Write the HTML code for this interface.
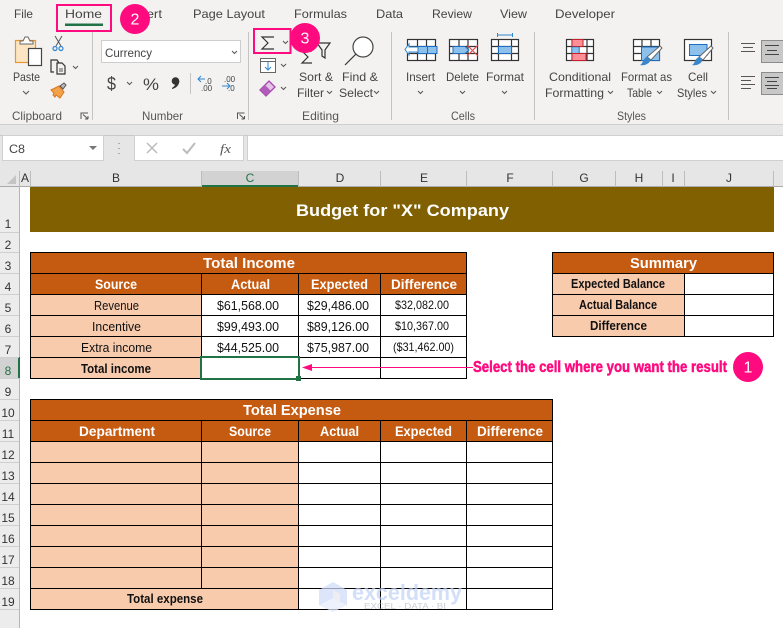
<!DOCTYPE html>
<html><head><meta charset="utf-8"><style>
html,body{margin:0;padding:0;background:#fff;width:783px;height:628px;overflow:hidden}
svg{display:block}
text{font-family:"Liberation Sans",sans-serif;white-space:pre}
.r{font-size:12px;fill:#444}
.d{font-size:13px;fill:#111}
.b{font-size:13px;fill:#111;font-weight:bold}
.w{font-size:14px;fill:#fff;font-weight:bold}
.h{font-size:12px;fill:#555}
.n{font-size:12px;fill:#333;text-anchor:middle}
.l{stroke:#000;stroke-width:1;fill:none}
.c{fill:none;stroke:#555;stroke-width:1}
.i{fill:none;stroke:#333;stroke-width:1.2}
</style></head><body>
<svg width="783" height="628" viewBox="0 0 783 628" xmlns="http://www.w3.org/2000/svg">
<!-- ribbon -->
<rect width="783" height="125" fill="#f3f2f1"/>
<rect y="124" width="783" height="63" fill="#e6e6e6"/>
<rect y="124" width="783" height="1" fill="#cfcfcf"/>
<rect y="135" width="783" height="1" fill="#c8c8c8"/>
<!-- tabs -->
<text class="r" x="14" y="18" textLength="19" lengthAdjust="spacingAndGlyphs">File</text>
<text class="r" x="65" y="18" textLength="37" lengthAdjust="spacingAndGlyphs">Home</text>
<text class="r" x="129" y="18" textLength="33" lengthAdjust="spacingAndGlyphs">Insert</text>
<text class="r" x="193" y="18" textLength="72" lengthAdjust="spacingAndGlyphs">Page Layout</text>
<text class="r" x="294" y="18" textLength="53" lengthAdjust="spacingAndGlyphs">Formulas</text>
<text class="r" x="376" y="18" textLength="27" lengthAdjust="spacingAndGlyphs">Data</text>
<text class="r" x="432" y="18" textLength="40" lengthAdjust="spacingAndGlyphs">Review</text>
<text class="r" x="500" y="18" textLength="27" lengthAdjust="spacingAndGlyphs">View</text>
<text class="r" x="555" y="18" textLength="60" lengthAdjust="spacingAndGlyphs">Developer</text>
<rect x="65" y="23.500" width="38" height="2.500" fill="#217346"/>
<rect x="57" y="5" width="54" height="26" fill="none" stroke="#ff0a7f" stroke-width="2"/>
<rect x="254" y="29" width="36.500" height="24" fill="none" stroke="#ff0a7f" stroke-width="2"/>
<!-- separators -->
<g fill="#c4c4c4"><rect x="92" y="32" width="1" height="88"/><rect x="248" y="32" width="1" height="88"/><rect x="391" y="32" width="1" height="88"/><rect x="534" y="32" width="1" height="88"/><rect x="728" y="32" width="1" height="88"/><rect x="190" y="73" width="1" height="21"/></g>
<!-- clipboard -->
<rect x="15.500" y="40.500" width="20" height="22" fill="#fbe5c3" stroke="#e8962e" stroke-width="1.200"/>
<path d="M20 44v-3h3l2-4h3l2 4h3v3z" fill="#fff" stroke="#666"/>
<rect x="28.500" y="48.500" width="13" height="17" fill="#fff" stroke="#444" stroke-width="1.200"/>
<text class="r" x="13" y="81" textLength="27" lengthAdjust="spacingAndGlyphs">Paste</text>
<path class="c" d="M23 91l3 3 3-3"/>
<path d="M55 36l6 10M62 36l-6 10" stroke="#555" fill="none"/>
<circle cx="55" cy="48.500" r="2" fill="none" stroke="#2e86d0" stroke-width="1.200"/><circle cx="61" cy="48.500" r="2" fill="none" stroke="#2e86d0" stroke-width="1.200"/>
<path class="i" d="M54 72h-3V60h6l2 3M57 63h5l3 3v8h-8z"/><path d="M59 69h4M59 71h4" stroke="#555"/>
<path class="c" d="M73 66l2.500 2.500L78 66"/>
<path d="M51 90l8-4 5 6-4 6-4-3-1 2-2-2 1-2z" fill="#f2a24a" stroke="#d9761e"/><path d="M60 86l4-3 2 2-3 4z" fill="#bbb" stroke="#555"/>
<text class="h" x="12" y="120" textLength="50" lengthAdjust="spacingAndGlyphs">Clipboard</text>
<g class="c" stroke-width=".9"><path d="M81 119v-6h7M88 119h-3M88 119v-3M83 114.500l4.500 4"/><path d="M237.500 119v-6h7M244.500 119h-3M244.500 119v-3M239.500 114.500l4.500 4"/></g>
<!-- number -->
<rect x="101.500" y="40.500" width="139" height="22" fill="#fff" stroke="#cdcdcd"/>
<text class="r" x="105" y="57" textLength="47" lengthAdjust="spacingAndGlyphs">Currency</text>
<path class="c" d="M232 51l2.500 2.500L237 51" stroke-width="1.200"/>
<text x="107" y="90" font-size="18" fill="#444" textLength="9" lengthAdjust="spacingAndGlyphs">$</text>
<path class="c" d="M127 82l2.500 2.500L132 82"/>
<text x="143" y="90" font-size="17" fill="#444" textLength="16" lengthAdjust="spacingAndGlyphs">%</text>
<circle cx="175.500" cy="81" r="3.800" fill="#333"/><path d="M179.300 81c0 4-3 7-7 8l-.5-1c2-1 3.500-2.500 3.500-5z" fill="#333"/>
<text x="205" y="84" font-size="8" fill="#444">.0</text><text x="201" y="91" font-size="8" fill="#444">.00</text>
<path d="M205 79h-7m3-3l-3 3 3 3" stroke="#2e86d0" fill="none"/>
<text x="224" y="82" font-size="8" fill="#444">.00</text><text x="228" y="91" font-size="8" fill="#444">.0</text>
<path d="M222 86h8m-3-3l3 3-3 3" stroke="#2e86d0" fill="none"/>
<text class="h" x="142" y="120" textLength="41" lengthAdjust="spacingAndGlyphs">Number</text>
<!-- editing -->
<path class="i" d="M274 37h-12l6 6-6 6h12"/>
<path class="c" d="M283 41l2.500 2.500L288 41"/>
<rect x="260.500" y="58.500" width="15" height="14" fill="#fff" stroke="#666"/><path d="M260.500 61.500h15" stroke="#666"/><path d="M268 62v8m-3-3l3 3 3-3" stroke="#2e86d0" fill="none"/>
<path class="c" d="M281 64l2.500 2.500L286 64"/>
<path d="M260 90l9-9 6 6-9 9z" fill="#e5c4e8" stroke="#a546ad" stroke-width="1.300"/><path d="M260 90l5-5 6 6-5 5z" fill="#b05cb8"/>
<path class="c" d="M281 87l2.500 2.500L286 87"/>
<path class="i" d="M312 51h-10l6 6-6 6h10"/>
<path class="i" d="M317 43h13l-5 7v8l-3-2v-6z" stroke="#555"/>
<text class="r" x="299" y="81" textLength="34" lengthAdjust="spacingAndGlyphs">Sort &amp;</text>
<text class="r" x="297" y="97" textLength="27" lengthAdjust="spacingAndGlyphs">Filter</text>
<path class="c" d="M327 91l2.500 2.500L332 91"/>
<circle cx="363" cy="47" r="10" fill="#fff" stroke="#444" stroke-width="1.200"/><path class="i" d="M356 54l-11 11"/>
<text class="r" x="342" y="81" textLength="36" lengthAdjust="spacingAndGlyphs">Find &amp;</text>
<text class="r" x="339" y="97" textLength="34" lengthAdjust="spacingAndGlyphs">Select</text>
<path class="c" d="M374 91l2.500 2.500L379 91"/>
<text class="h" x="302" y="120" textLength="37" lengthAdjust="spacingAndGlyphs">Editing</text>
<!-- cells -->
<g class="i"><rect x="407.500" y="39.500" width="28" height="21" fill="#fff"/><path d="M407.500 46.500h28M407.500 53.500h28M417.500 39.500v21M426.500 39.500v21"/></g>
<rect x="418" y="46.500" width="19" height="7" fill="#8dc0ea" stroke="#1b6ec2"/><path d="M427.500 46.500v7" stroke="#1b6ec2"/>
<path d="M418 47h-9v-3l-4 5.500 4 5.500v-3h9z" fill="#fff" stroke="#2e86d0"/>
<g class="i"><rect x="449.500" y="39.500" width="28" height="21" fill="#fff"/><path d="M449.500 46.500h28M449.500 53.500h28M459 39.500v21M468 39.500v21"/></g>
<path d="M453 46.500h12l4 3.500-4 3.500h-12z" fill="#8dc0ea" stroke="#1b6ec2"/>
<path d="M467 45l11 11M478 45l-11 11" stroke="#e84b4b" stroke-width="1.200"/>
<g class="i"><rect x="491.500" y="39.500" width="27" height="21" fill="#fff"/><path d="M491.500 46.500h27M491.500 53.500h27M498.500 39.500v21M511.500 39.500v21"/></g>
<rect x="498.500" y="46.500" width="13" height="7" fill="#8dc0ea" stroke="#1b6ec2"/>
<path d="M497 35h16M497.500 33v4M512.500 33v4" stroke="#2e86d0"/>
<text class="r" x="406" y="81" textLength="29" lengthAdjust="spacingAndGlyphs">Insert</text>
<text class="r" x="446" y="81" textLength="33" lengthAdjust="spacingAndGlyphs">Delete</text>
<text class="r" x="486" y="81" textLength="38" lengthAdjust="spacingAndGlyphs">Format</text>
<path class="c" d="M418 91l2.500 2.500L423 91M460 91l2.500 2.500L465 91M502 91l2.500 2.500L507 91"/>
<text class="h" x="451" y="120" textLength="24" lengthAdjust="spacingAndGlyphs">Cells</text>
<!-- styles -->
<g class="i"><rect x="566.500" y="39.500" width="27" height="21" fill="#fff"/><path d="M566.500 46.500h27M566.500 53.500h27M572 39.500v21M579 39.500v21M587 39.500v21"/></g>
<rect x="572" y="39.500" width="11" height="7" fill="#ff8f97" stroke="#c8202b"/><rect x="572" y="47" width="7" height="6.500" fill="#8dc0ea" stroke="#1b6ec2" stroke-width=".5"/><rect x="572" y="53.500" width="14" height="7" fill="#ff8f97" stroke="#c8202b"/>
<g class="i"><rect x="633.500" y="39.500" width="26" height="21" fill="#fff"/><path d="M633.500 46.500h26M633.500 53.500h26M642 39.500v21M651 39.500v21"/></g>
<rect x="641.500" y="47" width="18" height="13.500" fill="#8dc0ea" stroke="#1b6ec2"/>
<path d="M647 57l13-11 2 2-11 12z" fill="#fff" stroke="#666"/><path d="M640 65c3-1 3-7 7-8 2 0 4 2 3 4-1 3-6 5-10 4z" fill="#3a87cb"/>
<g class="i"><rect x="684.500" y="39.500" width="27" height="21" fill="#fff"/></g>
<rect x="689.500" y="44.500" width="17.500" height="11" fill="#8dc0ea" stroke="#1b6ec2"/>
<path d="M699 57l12-11 2 2-10 12z" fill="#fff" stroke="#666"/><path d="M692 65c3-1 3-7 7-8 2 0 4 2 3 4-1 3-6 5-10 4z" fill="#3a87cb"/>
<text class="r" x="549" y="81" textLength="62" lengthAdjust="spacingAndGlyphs">Conditional</text>
<text class="r" x="545" y="97" textLength="59" lengthAdjust="spacingAndGlyphs">Formatting</text>
<path class="c" d="M608 91l2.500 2.500L613 91"/>
<text class="r" x="621" y="81" textLength="51" lengthAdjust="spacingAndGlyphs">Format as</text>
<text class="r" x="627" y="97" textLength="25" lengthAdjust="spacingAndGlyphs">Table</text>
<path class="c" d="M657 91l2.500 2.500L662 91"/>
<text class="r" x="688" y="81" textLength="20" lengthAdjust="spacingAndGlyphs">Cell</text>
<text class="r" x="677" y="97" textLength="30" lengthAdjust="spacingAndGlyphs">Styles</text>
<path class="c" d="M711 91l2.500 2.500L716 91"/>
<text class="h" x="617" y="120" textLength="29" lengthAdjust="spacingAndGlyphs">Styles</text>
<!-- align -->
<path d="M741 43.500h14M743 47.500h10M741 51.500h14M741 76.500h14M741 80.500h10M741 84.500h14M741 88.500h10" stroke="#555"/>
<rect x="761.500" y="40.500" width="22" height="22" fill="#c8c8c8" stroke="#8c8c8c"/>
<rect x="761.500" y="72.500" width="22" height="22" fill="#c8c8c8" stroke="#8c8c8c"/>
<path d="M765 45.500h14M767 50.500h10M765 54.500h14M765 77.500h14M767 81.500h10M765 85.500h14M767 88.500h10" stroke="#444"/>
<!-- formula bar -->
<rect x="2.500" y="135.500" width="101" height="25" fill="#fff" stroke="#d0d0d0"/>
<text class="r" x="9" y="153" textLength="16" lengthAdjust="spacingAndGlyphs">C8</text>
<path d="M89 146h8l-4 4z" fill="#777"/>
<path d="M119 143v1M119 148v1M119 153v1" stroke="#999" stroke-width="1.500"/>
<rect x="134.500" y="135.500" width="109" height="25" fill="#fff" stroke="#d0d0d0"/>
<path d="M147 143l10 10M157 143l-10 10" stroke="#bbb" stroke-width="1.500"/>
<path d="M183 149l4 4 8-10" stroke="#bbb" stroke-width="2" fill="none"/>
<text x="220" y="153" font-size="13" font-style="italic" fill="#555" style="font-family:'Liberation Serif',serif" textLength="11" lengthAdjust="spacingAndGlyphs">fx</text>
<rect x="247.500" y="135.500" width="536" height="25" fill="#fff" stroke="#d0d0d0"/>
<!-- headers -->
<rect y="171" width="783" height="15" fill="#e6e6e6"/>
<rect x="0" y="186" width="783" height="1" fill="#aaa"/>
<path d="M7 184h9v-9z" fill="#c4c4c4"/>
<rect x="201" y="171" width="97" height="15" fill="#d2d2d2"/>
<rect x="201" y="185" width="97" height="2" fill="#217346"/>
<path d="M19.500 171v16M30.500 171v16M201.500 171v16M298.500 171v16M380.500 171v16M466.500 171v16M552.500 171v16M615.500 171v16M662.500 171v16M684.500 171v16M773.500 171v16" stroke="#bcbcbc"/>
<text class="n" x="25" y="182" font-size="11">A</text><text class="n" x="116" y="182">B</text><text class="n" x="250" y="182" style="fill:#217346">C</text><text class="n" x="340" y="182">D</text><text class="n" x="424" y="182">E</text><text class="n" x="510" y="182">F</text><text class="n" x="584" y="182">G</text><text class="n" x="639" y="182">H</text><text class="n" x="673" y="182">I</text><text class="n" x="729" y="182">J</text>
<!-- row headers -->
<rect y="187" width="19" height="441" fill="#ececec"/>
<rect y="357" width="19" height="21" fill="#d2d2d2"/>
<rect x="18" y="357" width="2" height="21" fill="#217346"/>
<rect x="19" y="187" width="1" height="170" fill="#b5b5b5"/><rect x="19" y="378" width="1" height="250" fill="#b5b5b5"/>
<path d="M0 232.500h19M0 252.500h19M0 273.500h19M0 294.500h19M0 315.500h19M0 336.500h19M0 357.500h19M0 378.500h19M0 399.500h19M0 420.500h19M0 441.500h19M0 462.500h19M0 483.500h19M0 504.500h19M0 525.500h19M0 546.500h19M0 567.500h19M0 588.500h19M0 609.500h19" stroke="#cfcfcf"/>
<g>
<text class="n" x="8" y="228">1</text><text class="n" x="8" y="249">2</text><text class="n" x="8" y="270">3</text><text class="n" x="8" y="291">4</text><text class="n" x="8" y="312">5</text><text class="n" x="8" y="333">6</text><text class="n" x="8" y="354">7</text><text class="n" x="8" y="375" style="fill:#217346">8</text><text class="n" x="8" y="396">9</text><text class="n" x="8" y="417">10</text><text class="n" x="8" y="438">11</text><text class="n" x="8" y="459">12</text><text class="n" x="8" y="480">13</text><text class="n" x="8" y="501">14</text><text class="n" x="8" y="522">15</text><text class="n" x="8" y="543">16</text><text class="n" x="8" y="564">17</text><text class="n" x="8" y="585">18</text><text class="n" x="8" y="606">19</text>
</g>
<!-- title -->
<rect x="30" y="187" width="744" height="45" fill="#806000"/>
<text x="296" y="216" font-size="17" font-weight="bold" fill="#fff" textLength="213" lengthAdjust="spacingAndGlyphs">Budget for "X" Company</text>
<!-- income table -->
<rect x="30" y="252" width="436" height="42" fill="#c55a11"/>
<rect x="30" y="294" width="171" height="84" fill="#f8cbad"/>
<path class="l" d="M30.500 252.500h436v126h-436zM30.500 273.500h436M30.500 294.500h436M30.500 315.500h436M30.500 336.500h436M30.500 357.500h436M201.500 273.500v105M298.500 273.500v105M380.500 273.500v105"/>
<text class="w" x="203" y="268" style="font-size:15px" textLength="92" lengthAdjust="spacingAndGlyphs">Total Income</text>
<text class="w" x="95" y="289" textLength="42" lengthAdjust="spacingAndGlyphs">Source</text>
<text class="w" x="231" y="289" textLength="39" lengthAdjust="spacingAndGlyphs">Actual</text>
<text class="w" x="311" y="289" textLength="57" lengthAdjust="spacingAndGlyphs">Expected</text>
<text class="w" x="391" y="289" textLength="66" lengthAdjust="spacingAndGlyphs">Difference</text>
<text class="d" x="94" y="310" textLength="45" lengthAdjust="spacingAndGlyphs">Revenue</text>
<text class="d" x="92" y="331" textLength="49" lengthAdjust="spacingAndGlyphs">Incentive</text>
<text class="d" x="81" y="352" textLength="71" lengthAdjust="spacingAndGlyphs">Extra income</text>
<text class="b" x="81" y="373" textLength="70" lengthAdjust="spacingAndGlyphs">Total income</text>
<text class="d" x="217" y="310" textLength="62" lengthAdjust="spacingAndGlyphs">$61,568.00</text>
<text class="d" x="217" y="331" textLength="62" lengthAdjust="spacingAndGlyphs">$99,493.00</text>
<text class="d" x="217" y="352" textLength="62" lengthAdjust="spacingAndGlyphs">$44,525.00</text>
<text class="d" x="307" y="310" textLength="62" lengthAdjust="spacingAndGlyphs">$29,486.00</text>
<text class="d" x="307" y="331" textLength="62" lengthAdjust="spacingAndGlyphs">$89,126.00</text>
<text class="d" x="307" y="352" textLength="62" lengthAdjust="spacingAndGlyphs">$75,987.00</text>
<text class="d" x="395" y="309" style="font-size:12px" textLength="54" lengthAdjust="spacingAndGlyphs">$32,082.00</text>
<text class="d" x="395" y="330" style="font-size:12px" textLength="54" lengthAdjust="spacingAndGlyphs">$10,367.00</text>
<text class="d" x="393" y="351" style="font-size:12px" textLength="61" lengthAdjust="spacingAndGlyphs">($31,462.00)</text>
<!-- selection -->
<rect x="201" y="357" width="98" height="22" fill="#fff" stroke="#217346" stroke-width="2"/>
<rect x="296" y="376" width="5" height="5" fill="#217346"/>
<!-- summary -->
<rect x="552" y="252" width="222" height="21" fill="#c55a11"/>
<rect x="552" y="273" width="132" height="63" fill="#f8cbad"/>
<path class="l" d="M552.500 252.500h221v84h-221zM552.500 273.500h221M552.500 294.500h221M552.500 315.500h221M684.500 273.500v63"/>
<text class="w" x="630" y="268" style="font-size:15px" textLength="67" lengthAdjust="spacingAndGlyphs">Summary</text>
<text class="b" x="571" y="288" textLength="94" lengthAdjust="spacingAndGlyphs">Expected Balance</text>
<text class="b" x="579" y="309" textLength="78" lengthAdjust="spacingAndGlyphs">Actual Balance</text>
<text class="b" x="590" y="330" textLength="57" lengthAdjust="spacingAndGlyphs">Difference</text>
<!-- expense table -->
<rect x="30" y="399" width="522" height="42" fill="#c55a11"/>
<rect x="30" y="441" width="268" height="168" fill="#f8cbad"/>
<path class="l" d="M30.500 399.500h522v210h-522zM30.500 420.500h522M30.500 441.500h522M30.500 462.500h522M30.500 483.500h522M30.500 504.500h522M30.500 525.500h522M30.500 546.500h522M30.500 567.500h522M30.500 588.500h522M201.500 420.500v168M298.500 420.500v189M380.500 420.500v189M466.500 420.500v189"/>
<text class="w" x="243" y="415" style="font-size:15px" textLength="98" lengthAdjust="spacingAndGlyphs">Total Expense</text>
<text class="w" x="79" y="436" textLength="76" lengthAdjust="spacingAndGlyphs">Department</text>
<text class="w" x="229" y="436" textLength="42" lengthAdjust="spacingAndGlyphs">Source</text>
<text class="w" x="320" y="436" textLength="39" lengthAdjust="spacingAndGlyphs">Actual</text>
<text class="w" x="395" y="436" textLength="57" lengthAdjust="spacingAndGlyphs">Expected</text>
<text class="w" x="477" y="436" textLength="66" lengthAdjust="spacingAndGlyphs">Difference</text>
<text class="b" x="127" y="603" textLength="76" lengthAdjust="spacingAndGlyphs">Total expense</text>
<!-- watermark -->
<g opacity=".72">
<path d="M333 582l14 8v15l-14 7-14-7v-15z" fill="#cfdcf8"/><path d="M333 590l7 4v8l-7-4z" fill="#e8e8ee"/><path d="M320 605l13-7 14 7-14 7z" fill="#e6edfb"/>
<text x="352" y="600" font-size="22" font-weight="bold" fill="#c3d3f6" textLength="110" lengthAdjust="spacingAndGlyphs">exceldemy</text>
<text x="364" y="609" font-size="8" fill="#b8bcc4" textLength="82" lengthAdjust="spacingAndGlyphs">EXCEL · DATA · BI</text>
</g>
<!-- annotation -->
<path d="M473 367.500H306" stroke="#ff0a7f" stroke-width="1"/>
<path d="M302 367.500l10-3.500v7z" fill="#ff0a7f"/>
<text x="473" y="372" font-size="16" font-weight="bold" fill="#ff0a7f" stroke="#ff0a7f" stroke-width=".5" textLength="254" lengthAdjust="spacingAndGlyphs">Select the cell where you want the result</text>
<!-- circles -->
<circle cx="135" cy="19" r="15" fill="#ff0a7f"/><text x="135" y="24.500" font-size="16" fill="#fff" text-anchor="middle">2</text>
<circle cx="305" cy="38" r="15" fill="#ff0a7f"/><text x="305" y="43.500" font-size="16" fill="#fff" text-anchor="middle">3</text>
<circle cx="748" cy="367" r="15" fill="#ff0a7f"/><text x="748" y="372.500" font-size="16" fill="#fff" text-anchor="middle">1</text>
</svg>
</body></html>
